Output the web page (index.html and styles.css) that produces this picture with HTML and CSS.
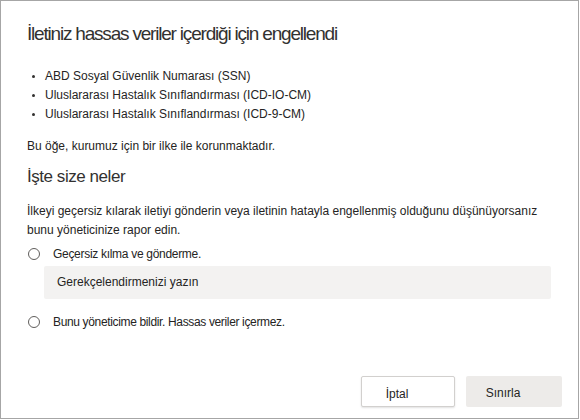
FILE: index.html
```html
<!DOCTYPE html>
<html lang="tr">
<head>
<meta charset="utf-8">
<link rel="stylesheet" href="styles.css">
</head>
<body>
<div class="dialog">
  <h1 class="title">İletiniz hassas veriler içerdiği için engellendi</h1>
  <ul class="types">
    <li>ABD Sosyal Güvenlik Numarası (SSN)</li>
    <li>Uluslararası Hastalık Sınıflandırması (ICD-IO-CM)</li>
    <li>Uluslararası Hastalık Sınıflandırması (ICD-9-CM)</li>
  </ul>
  <p class="policy">Bu öğe, kurumuz için bir ilke ile korunmaktadır.</p>
  <h2 class="subtitle">İşte size neler</h2>
  <p class="desc">İlkeyi geçersiz kılarak iletiyi gönderin veya iletinin hatayla engellenmiş olduğunu düşünüyorsanız bunu yöneticinize rapor edin.</p>
  <label class="option opt-first"><span class="radio"></span><span class="opt-text condensed">Geçersiz kılma ve gönderme.</span></label>
  <div class="justify">Gerekçelendirmenizi yazın</div>
  <label class="option opt-second"><span class="radio"></span><span class="opt-text tight">Bunu yöneticime bildir. Hassas veriler içermez.</span></label>
  <div class="footer">
    <button class="btn btn-cancel">İptal</button>
    <button class="btn btn-primary">Sınırla</button>
  </div>
</div>
</body>
</html>
```

FILE: styles.css
```css
html, body {
  margin: 0;
  padding: 0;
  background: #fff;
}
body {
  font-family: "Liberation Sans", Arial, sans-serif;
  color: #252423;
}
.dialog {
  box-sizing: border-box;
  width: 579px;
  height: 419px;
  border: 1px solid #a6a6a6;
  padding: 20px 16px 11px 26px;
  display: flex;
  flex-direction: column;
}
.title {
  margin: 0;
  font-size: 19px;
  font-weight: normal;
  line-height: 25px;
  letter-spacing: -1.2px;
  color: #323130;
}
.types {
  margin: 21px 0 0 0;
  padding: 0 0 0 18px;
  list-style: none;
  font-size: 12px;
  line-height: 19px;
}
.types li {
  position: relative;
}
.types li::before {
  content: "";
  position: absolute;
  left: -13px;
  top: 8px;
  width: 3px;
  height: 3px;
  border-radius: 50%;
  background: #323130;
}
.policy {
  margin: 13px 0 0 0;
  font-size: 12px;
  line-height: 18px;
}
.subtitle {
  margin: 10px 0 0 0;
  font-size: 17px;
  font-weight: normal;
  line-height: 24px;
  letter-spacing: -0.45px;
  color: #323130;
}
.desc {
  margin: 13px 0 0 0;
  font-size: 12px;
  line-height: 19px;
}
.option {
  display: flex;
  align-items: center;
  font-size: 12px;
  line-height: 18px;
}
.opt-first {
  margin-top: 5px;
}
.opt-second {
  margin-top: 14px;
}
.radio {
  box-sizing: border-box;
  width: 12px;
  height: 12px;
  border: 1px solid #605e5c;
  border-radius: 50%;
  margin-left: 1px;
  margin-right: 13px;
  flex: none;
}
.condensed {
  letter-spacing: -0.3px;
}
.tight {
  letter-spacing: -0.35px;
}
.justify {
  margin: 3px 0 0 17px;
  width: 507px;
  height: 33px;
  box-sizing: border-box;
  background: #f3f2f1;
  border-radius: 2px;
  padding-left: 13px;
  font-size: 12px;
  line-height: 33px;
  color: #252423;
}
.footer {
  margin-top: auto;
  display: flex;
  justify-content: flex-end;
  gap: 11px;
}
.btn {
  font-family: "Liberation Sans", Arial, sans-serif;
  font-size: 12px;
  color: #252423;
  height: 31px;
  border-radius: 2px;
  padding: 4px 22px 0 0;
}
.btn-cancel {
  width: 94px;
  background: #fff;
  border: 1px solid #d2d0ce;
  box-shadow: 0 1px 2px rgba(0,0,0,0.12);
}
.btn-primary {
  width: 96px;
  background: #edebe9;
  border: none;
  padding-top: 2px;
}
```
